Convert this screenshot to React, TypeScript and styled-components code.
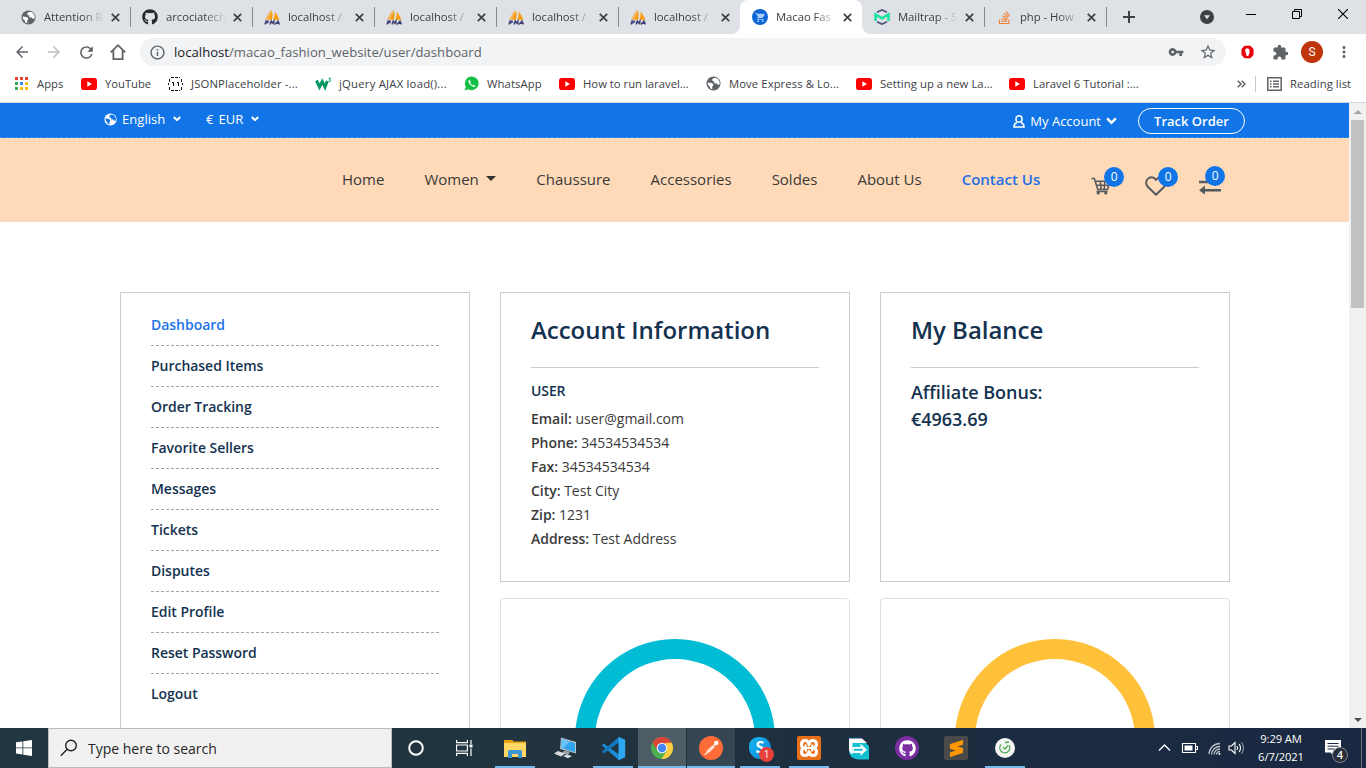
import React from 'react';
import styled, { createGlobalStyle, css } from 'styled-components';
import { FaGithub, FaStackOverflow } from 'react-icons/fa';
import {
  MdArrowBack,
  MdArrowForward,
  MdRefresh,
  MdInfoOutline,
  MdVpnKey,
  MdStarBorder,
  MdExtension,
  MdMoreVert,
  MdShoppingCart,
} from 'react-icons/md';
import { SiSublimetext } from 'react-icons/si';

const GlobalStyle = createGlobalStyle`
  * { box-sizing: border-box; }
  html, body { margin: 0; height: 768px; overflow: hidden; background: #fff; }
  body { font-family: "Open Sans", "Noto Sans", sans-serif; }
  svg { display: block; flex: none; }
`;

const Screen = styled.div`
  width: 1366px;
  height: 768px;
  display: flex;
  flex-direction: column;
  overflow: hidden;
`;

/* ---------- Browser chrome ---------- */

const TabStrip = styled.div`
  height: 34px;
  flex: none;
  display: flex;
  padding-left: 8px;
  background: #dee1e6;
`;

const TabBox = styled.div<{ $active?: boolean; $divider?: boolean }>`
  position: relative;
  width: 122px;
  height: 34px;
  flex: none;
  display: flex;
  align-items: center;
  padding-left: 12px;
  ${p => p.$active && css`
    background: #fff;
    border-radius: 8px 8px 0 0;
    &::before, &::after {
      content: '';
      position: absolute;
      bottom: 0;
      width: 8px;
      height: 8px;
    }
    &::before { left: -8px; background: radial-gradient(circle at 0 0, transparent 7.5px, #fff 8px); }
    &::after { right: -8px; background: radial-gradient(circle at 100% 0, transparent 7.5px, #fff 8px); }
  `}
  ${p => p.$divider && css`
    &::after {
      content: '';
      position: absolute;
      right: -1px;
      top: 7px;
      width: 1px;
      height: 20px;
      background: #85888d;
    }
  `}
`;

const TabTitle = styled.span`
  width: 62px;
  margin-left: 8px;
  white-space: nowrap;
  font-size: 11.3px;
  line-height: 18px;
  letter-spacing: -0.05px;
  color: #3c4043;
  mask-image: linear-gradient(90deg, #000 38px, transparent 60px);
`;

const TabClose = styled.span`
  display: flex;
  margin-left: 5px;
`;

const StripSpacer = styled.div`
  flex: 1;
`;

const WindowButtons = styled.div`
  display: flex;
  align-items: center;
  height: 28px;
  gap: 36px;
  padding-right: 18px;
`;

const NewTab = styled.div`
  display: flex;
  align-items: center;
  padding-left: 17px;
`;

const DownCircle = styled.div`
  display: flex;
  align-items: center;
  padding-right: 32px;
`;

const Toolbar = styled.div`
  height: 36px;
  flex: none;
  display: flex;
  align-items: center;
  padding-left: 13px;
  color: #5f6368;
`;

const NavButtons = styled.div`
  width: 127px;
  display: flex;
  gap: 14px;
`;

const Omnibox = styled.div`
  width: 1086px;
  height: 28px;
  display: flex;
  align-items: center;
  padding: 0 9px;
  border-radius: 14px;
  background: #f1f3f4;
`;

const Url = styled.span`
  flex: 1;
  margin-left: 8px;
  font-size: 13.1px;
  letter-spacing: 0.02px;
  color: #5f6368;
  b { font-weight: 400; color: #202124; }
`;

const OmniActions = styled.div`
  display: flex;
  align-items: center;
  gap: 15px;
`;

const ToolbarActions = styled.div`
  flex: 1;
  display: flex;
  align-items: center;
  padding-left: 15px;
`;

const Blocker = styled.span`
  margin-right: 18px;
`;

const Avatar = styled.div`
  width: 22px;
  height: 22px;
  margin: 0 12px 0 12px;
  border-radius: 50%;
  background: #bf360c;
  color: #fff;
  font: 12px/22px Roboto, sans-serif;
  text-align: center;
`;

const BookmarkBar = styled.div`
  height: 33px;
  flex: none;
  display: flex;
  align-items: center;
  padding: 0 0 5px 13px;
  border-bottom: 1px solid #d5d7da;
`;

const BookmarkItem = styled.div<{ $w?: number; $ls?: number }>`
  width: ${p => (p.$w ? `${p.$w}px` : 'auto')};
  flex: none;
  display: flex;
  align-items: center;
  gap: 8px;
  font-size: 11.3px;
  line-height: 15px;
  letter-spacing: ${p => p.$ls || 0}px;
  color: #3c4043;
  white-space: nowrap;
`;

const IconSlot = styled.span`
  width: 16px;
  height: 16px;
  flex: none;
  display: flex;
  align-items: center;
  justify-content: center;
`;

const BookmarkDivider = styled.div`
  width: 1px;
  height: 16px;
  margin: 0 11px 0 9px;
  background: #c6c8cb;
`;

const AppsGrid = styled.span`
  display: grid;
  grid-template-columns: repeat(3, 3px);
  gap: 2px;
`;

const AppDot = styled.i<{ $c: string }>`
  width: 3px;
  height: 3px;
  background: ${p => p.$c};
`;

/* ---------- Page ---------- */

const Viewport = styled.div`
  height: 625px;
  flex: none;
  display: flex;
  overflow: hidden;
`;

const Page = styled.main`
  width: 1349px;
  height: 625px;
  overflow: hidden;
  background: #fff;
`;

const TopBar = styled.div`
  height: 35px;
  display: flex;
  justify-content: space-between;
  padding: 0 104px 0 104px;
  background: #1175e7;
  border-bottom: 1px dashed #378cef;
  color: #fff;
  font-size: 13px;
  font-weight: 400;
`;

const TopLeft = styled.div`
  display: flex;
  height: 32px;
  align-items: center;
`;

const Select = styled.div<{ $w: number }>`
  width: ${p => p.$w}px;
  display: flex;
  align-items: center;
  gap: 5px;
  letter-spacing: 0.05px;
  white-space: nowrap;
`;

const SelectArrow = styled.span`
  padding: 0 0 1px 3px;
`;

const TopRight = styled.div`
  display: flex;
  height: 36px;
  align-items: center;
`;

const Account = styled.div`
  display: flex;
  align-items: center;
  gap: 5px;
  margin-right: 21px;
`;

const TrackButton = styled.div`
  width: 107px;
  height: 26px;
  border: 1px solid #fff;
  border-radius: 13px;
  font-weight: 600;
  line-height: 24px;
  text-align: center;
`;

const Header = styled.header`
  height: 84px;
  display: flex;
  align-items: center;
  padding: 0 0 2px 342px;
  background: #ffdab9;
  border-bottom: 1px solid #f3dcc8;
`;

const NavLink = styled.a<{ $active?: boolean }>`
  display: flex;
  align-items: center;
  margin-right: 40px;
  font-size: 15px;
  font-weight: ${p => (p.$active ? 600 : 400)};
  color: ${p => (p.$active ? '#1f6fe5' : '#3a3a3a')};
  white-space: nowrap;
`;

const Caret = styled.i`
  margin-left: 7.5px;
  border: 5px solid transparent;
  border-top-color: #333;
  border-bottom: 0;
`;

const HeaderIcons = styled.div`
  display: flex;
  align-items: flex-start;
  gap: 32px;
  margin: 14px 0 0 11px;
`;

const HeaderIcon = styled.div`
  position: relative;
  width: 22px;
  height: 22px;
  padding-top: 1px;
`;

const Badge = styled.span<{ $x: number; $y: number }>`
  position: absolute;
  left: ${p => p.$x}px;
  top: ${p => p.$y}px;
  width: 20px;
  height: 20px;
  border-radius: 50%;
  background: #1175e7;
  color: #fff;
  font-size: 12px;
  line-height: 20px;
  text-align: center;
`;

const Content = styled.div`
  display: grid;
  grid-template-columns: 350px 350px 350px;
  grid-template-rows: 290px 290px;
  column-gap: 30px;
  row-gap: 16px;
  padding: 70px 0 0 120px;
`;

const Sidebar = styled.nav`
  grid-row: span 2;
  padding: 12px 30px 0;
  border: 1px solid #ccc;
`;

const SideLink = styled.a<{ $active?: boolean }>`
  display: block;
  height: 41px;
  border-bottom: 1px dashed #a5a5a5;
  font-size: 14px;
  font-weight: 600;
  line-height: 40px;
  letter-spacing: -0.03px;
  color: ${p => (p.$active ? '#2374e8' : '#143250')};
  &:last-child { border-bottom: 0; }
`;

const Card = styled.section`
  padding: 19px 30px;
  border: 1px solid #ccc;
`;

const CardTitle = styled.h4`
  height: 56px;
  margin: 0 0 9px;
  border-bottom: 1px solid #ccc;
  font-size: 24px;
  font-weight: 600;
  line-height: 36px;
  letter-spacing: -0.03px;
  color: #143250;
`;

const UserName = styled.h6`
  margin: 0 0 3px;
  font-size: 14px;
  font-weight: 600;
  line-height: 27px;
  letter-spacing: -0.1px;
  color: #143250;
`;

const InfoRow = styled.p`
  margin: 0;
  font-size: 14px;
  line-height: 24px;
  color: #3a3a3a;
  b { font-weight: 600; letter-spacing: -0.03px; }
`;

const Balance = styled.div`
  padding-top: 2px;
`;

const BalanceLine = styled.p`
  margin: 0;
  font-size: 18px;
  font-weight: 600;
  line-height: 27px;
  letter-spacing: -0.03px;
  color: #143250;
`;

const ChartCard = styled.section`
  display: flex;
  justify-content: center;
  align-items: flex-start;
  padding-top: 40px;
  border: 1px solid #dfdfdf;
  border-radius: 4px;
`;

const Ring = styled.div<{ $c: string }>`
  width: 200px;
  height: 200px;
  border: 20px solid ${p => p.$c};
  border-radius: 50%;
`;

const Scrollbar = styled.div`
  width: 17px;
  height: 625px;
  display: flex;
  flex-direction: column;
  align-items: center;
  background: #f1f1f1;
`;

const ScrollArrow = styled.div`
  height: 17px;
  display: flex;
  align-items: center;
`;

const Thumb = styled.div`
  width: 13px;
  height: 188px;
  margin-bottom: auto;
  background: #c1c1c1;
`;

/* ---------- Taskbar ---------- */

const Taskbar = styled.div`
  height: 40px;
  flex: none;
  display: flex;
  background: linear-gradient(90deg, #203640 0%, #21343f 40%, #1c2d40 70%, #1a2842 100%);
`;

const StartButton = styled.div`
  width: 48px;
  display: flex;
  align-items: center;
  justify-content: center;
`;

const SearchBox = styled.div`
  width: 344px;
  height: 40px;
  display: flex;
  align-items: center;
  gap: 10px;
  padding-left: 11px;
  border: 1px solid #bdbdbd;
  background: #f1f1f1;
  color: #262626;
  font-size: 14px;
`;

const TaskItem = styled.div<{ $w: number; $bar?: number; $bg?: string }>`
  position: relative;
  width: ${p => p.$w}px;
  height: 40px;
  flex: none;
  display: flex;
  align-items: center;
  justify-content: center;
  background: ${p => p.$bg || 'transparent'};
  ${p => p.$bar && css`
    &::after {
      content: '';
      position: absolute;
      bottom: 0;
      left: calc(50% - ${p.$bar / 2}px);
      width: ${p.$bar}px;
      height: 2px;
      background: #76b9ed;
    }
  `}
`;

const TaskGap = styled.div`
  width: 1px;
`;

const SkypeBlob = styled.div`
  width: 22px;
  height: 22px;
  border-radius: 9px 11px 9px 11px;
  background: linear-gradient(135deg, #1bb4f2, #0a86d8);
  color: #fff;
  font-size: 16px;
  font-weight: 700;
  line-height: 21px;
  text-align: center;
`;

const CountBadge = styled.span`
  position: absolute;
  left: 24px;
  top: 19px;
  width: 15px;
  height: 15px;
  border-radius: 50%;
  background: #e8403a;
  color: #fff;
  font-size: 10px;
  line-height: 15px;
  text-align: center;
`;

const Tile = styled.div<{ $bg: string; $r?: string }>`
  width: 24px;
  height: 24px;
  display: flex;
  align-items: center;
  justify-content: center;
  border-radius: ${p => p.$r || '2px'};
  background: ${p => p.$bg};
`;

const Tray = styled.div`
  margin-left: auto;
  display: flex;
  align-items: center;
  color: #fff;
`;

const Clock = styled.div`
  width: 64px;
  font-size: 11.2px;
  line-height: 18px;
  letter-spacing: -0.1px;
  text-align: center;
`;

const Notifications = styled.div`
  position: relative;
  width: 16px;
  height: 16px;
  margin: 0 0 0 12px;
`;

const NoticeCount = styled.span`
  position: absolute;
  left: 7px;
  top: 7px;
  width: 16px;
  height: 16px;
  border: 1px solid #7d838c;
  border-radius: 50%;
  background: #2a2f3a;
  font-size: 11px;
  font-weight: 600;
  line-height: 14px;
  text-align: center;
`;

const ShowDesktop = styled.div`
  width: 5px;
  height: 40px;
  margin-left: 20px;
  border-left: 1px solid #64707f;
`;

/* ---------- Drawings ---------- */

const GlobeIcon = ({ size = 15, disc = '#5f6368', land = '#fff' }: { size?: number; disc?: string; land?: string }) => (
  <svg width={size} height={size} viewBox="0 0 16 16">
    <circle cx="8" cy="8" r="7.500" fill={disc} />
    <path d="M1.800 6.800 4.200 7.200l2.600.6 1.200 2L6.500 11.200l.3 3-2.200-1-.8-2.400L2 9.200zM9.600 1.800 6.600 3.200l.2 1.900 2.200 1-.4 1.500 3 .3 1.200 1.800 1.600-.6.2-2.600-2-3.500z" fill={land} />
  </svg>
);

const PmaIcon = () => (
  <svg width="17" height="16" viewBox="0 0 17 16">
    <path d="M6.500 1 1 10.500h5z" fill="#f9b35c" />
    <path d="M7 .8c2 3 2.200 7 .6 10L4 10.600C6 7.500 7 4.500 7 .8z" fill="#f89c0e" />
    <path d="M10.500 2.500c2.500 2.500 3.500 5.500 5 8.300H9c1.600-2.500 2-5.300 1.500-8.300z" fill="#f89c0e" />
    <path d="M1 15.500 2 11.800h1.500q1.500.4.4 1.700l-2 .5M6 15.500 7.200 12l1 2L10 12l-.3 3.500M11 15.500 14 12l1.500 3.500M12.200 14.300H15" fill="none" stroke="#3b3c72" strokeWidth="1.300" />
  </svg>
);

const YouTubeIcon = () => (
  <svg width="16" height="12" viewBox="0 0 16 12">
    <rect width="16" height="12" rx="2.800" fill="#f00" />
    <path d="M6.300 3.300v5.400L11 6z" fill="#fff" />
  </svg>
);

const JsonIcon = () => (
  <svg width="15" height="14" viewBox="0 0 15 14" fill="none" stroke="#111" shapeRendering="crispEdges">
    <path d="M3 .5h9M3 13.500h9" strokeDasharray="3 1" />
    <path d="M1.500 1.500v3M13.500 1.500v3M1.500 9.500v3M13.500 9.500v3M.5 6v2M14.500 6v2" strokeWidth="1" />
    <path d="M4 5.500h2M5.500 6v3M9 5.500h2M10.500 6v3" />
  </svg>
);

const W3Icon = () => (
  <svg width="17" height="14" viewBox="0 0 17 14" fill="none" stroke="#059862">
    <path d="M1.500 3.500 4.500 10l2.700-5.500L10 10l2.300-6" strokeWidth="3" />
    <path d="M13.500 1.200h2.200l-1.200 1.300q1.800.5.6 1.900l-1.700-.2" strokeWidth=".9" />
  </svg>
);

const WhatsAppIcon = () => (
  <svg width="15" height="15" viewBox="0 0 15 15">
    <path d="M7.700.5A6.800 6.800 0 1 1 4.400 13.200L.6 14.400l1.200-3.700A6.800 6.800 0 0 1 7.700.5z" fill="#12c143" />
    <path d="M5.300 3.800C3.500 5 5 7.500 6.500 9s3.700 2.800 5 1.200L9.800 8.800l-1 .8Q6.900 8.700 6.200 6.800l.8-.9z" fill="#fff" />
  </svg>
);

const MailtrapIcon = () => (
  <svg width="16" height="16" viewBox="0 0 16 16">
    <path d="M3 3.300 8 .9l5 2.400M3 12.700l5 2.400 5-2.400" fill="none" stroke="#56597a" strokeWidth="1.800" />
    <path d="M1.600 12V5.500L8 9.300l6.400-3.800V12" fill="none" stroke="#17e2a0" strokeWidth="2.600" />
  </svg>
);

const CloseX = () => (
  <svg width="9" height="9" viewBox="0 0 9 9" stroke="#3c4043" strokeWidth="1.700">
    <path d="M.8.8l7.400 7.400M8.200.8.8 8.200" />
  </svg>
);

const ChevronDown = ({ size, sw }: { size: number; sw: number }) => (
  <svg width={size} height={size * 0.7} viewBox="0 0 10 7" fill="none" stroke="#fff" strokeWidth={sw}>
    <path d="M1 1.200 5 5.200l4-4" />
  </svg>
);

const ChromeIcon = () => (
  <svg width="24" height="24" viewBox="0 0 24 24">
    <circle cx="12" cy="12" r="11" fill="#4caf50" />
    <path d="M2.500 6.500A11 11 0 0 1 21.500 6.500L12 12H7z" fill="#db4437" />
    <path d="M21.500 6.500A11 11 0 0 1 11.500 23L17 14.500 15 6.500z" fill="#ffcd40" />
    <path d="M12 6.500h9.500L19 5 12 5z" fill="#db4437" />
    <path d="M2.500 6.500 7.200 14.500 8 9z" fill="#db4437" />
    <circle cx="12" cy="12" r="5.300" fill="#f4f4f4" />
    <circle cx="12" cy="12" r="4.200" fill="#4285f4" />
  </svg>
);

const VsCodeIcon = () => (
  <svg width="25" height="25" viewBox="0 0 25 25">
    <path d="M18 24.200.8 9.300 2.800 7.500 18 18.500z" fill="#1b8ad6" />
    <path d="M18 .8.8 15.700l2 1.800L18 6.500z" fill="#1478bd" />
    <path d="M17.500.8 24.200 3.800v17.400l-6.700 3z" fill="#2fa8f2" />
  </svg>
);

const ExplorerIcon = () => (
  <svg width="22" height="19" viewBox="0 0 22 19">
    <path d="M0 1h8.500l1 1.500H22V18H0z" fill="#e9a414" />
    <path d="M0 4h22v14H0z" fill="#ffd866" />
    <path d="M4 19v-6.500Q4 11 5.500 11h11Q18 11 18 12.500V19h-4v-4H8v4z" fill="#3b97d3" />
  </svg>
);

const ComputerIcon = () => (
  <svg width="24" height="24" viewBox="0 0 24 24">
    <path d="M8 1.500 23 6v11.500L7 13z" fill="#b8c2c8" />
    <path d="M8.800 2.800 22 6.900v9.400L8.200 12z" fill="#30a2ee" />
    <path d="M9 3l8 2.600L10 12.500 8.200 12z" fill="#67c2f8" />
    <path d="M11 14.500l-2 3 6 1.500 2-3z" fill="#9ba5aa" />
    <path d="M1 17.500 5 15l7 2.500-4 3zM10 20l4-1.500 5 1.500-4 2.200z" fill="#d9dddf" />
  </svg>
);

const PostmanIcon = () => (
  <svg width="24" height="24" viewBox="0 0 24 24">
    <circle cx="12" cy="12" r="12" fill="#ff6c37" />
    <path d="M5 19.500 8.500 14l5-4.500 2 1.800-5 4.700z" fill="#fff" />
    <path d="M13.800 9.200 16 7.300l1.300 1.300-2.200 2.200z" fill="#ffe1d4" />
    <circle cx="17.300" cy="7" r="2.200" fill="#fff" />
    <path d="M7 17.200l6.500-6" stroke="#ff8f66" strokeWidth=".7" />
  </svg>
);

const XamppIcon = () => (
  <svg width="20" height="20" viewBox="0 0 20 20" fill="none" stroke="#fff" strokeWidth="3" strokeLinejoin="round">
    <path d="M10 7Q9.500 2.500 6 2.500T2.500 6.500 6 10Q2.500 10.500 2.500 14T6 17.500 10 13.500Q10.500 17.500 14 17.500t3.500-3.500T14 10q3.500-.5 3.500-3.800T14 2.500 10 7z" />
    <path d="M7 10h6M6.500 6.500l.5 7M13.500 6.500l-.5 7" strokeWidth="2" />
  </svg>
);

const ShareIcon = () => (
  <svg width="24" height="24" viewBox="0 0 24 24">
    <path d="M1 1h13l5 5-5 7z" fill="#07415c" />
    <path d="M3 3.500h13l7 6.500v13.500H12q-9-1-9-9z" fill="#12bfd2" />
    <path d="M3 2.500h13l5 4.500H6.500v11.500q-3.500-2-3.500-6z" fill="#fff" />
    <path d="M6.500 11h8V7.800l6.500 6-6.500 6V17h-8z" fill="#fff" />
    <path d="M8 12.800h8.500v2H8z" fill="#12bfd2" />
  </svg>
);

const TrackerIcon = () => (
  <svg width="20" height="20" viewBox="0 0 20 20" fill="none">
    <circle cx="10" cy="10" r="10" fill="#f4f5f4" />
    <path d="M6 6.500A5 5 0 1 0 14 7M10 4.500l4-.5" stroke="#4bab50" strokeWidth="1.300" />
    <path d="M8 9l2 2 3-3.500" stroke="#4bab50" strokeWidth="1.200" />
  </svg>
);

const CartOutline = () => (
  <svg width="20" height="20" viewBox="0 0 20 20" fill="none" stroke="#555a60" strokeWidth="1.600">
    <path d="M.5 2.500h2.800l3.500 11h9.700l2.500-8.300H4.200M5.500 9.300h12M9.300 5.200l.8 8M13.800 5.200l-.5 8M5.500 15.500h11" />
    <circle cx="7.200" cy="17" r=".8" />
    <circle cx="14.800" cy="17" r=".8" />
  </svg>
);

const HeartOutline = () => (
  <svg width="22" height="20" viewBox="0 0 22 20" fill="none" stroke="#555a60" strokeWidth="2" strokeLinejoin="round">
    <path d="M11 18.700 2.600 10.500C.2 7.800.9 3.700 3.800 2 6.500.6 9.300 1.500 11 4c1.700-2.500 4.500-3.400 7.200-2 2.900 1.700 3.600 5.800 1.200 8.500z" />
  </svg>
);

const CompareIcon = () => (
  <svg width="22" height="20" viewBox="0 0 22 20" fill="#555a60">
    <path d="M0 4.700h16V1.200l5.500 4.600-5.500 4.500V7.200H0zM22 13H6V9.500L0 14.200 6 18.500v-3h16z" />
  </svg>
);

/* ---------- Data ---------- */

const TabIcon = styled(IconSlot)`
  ${Tile} { width: 16px; height: 16px; }
`;

const pma = { icon: <PmaIcon />, title: 'localhost /' };
const tabs: { icon: React.ReactNode; title: string; active?: boolean; divider?: boolean }[] = [
  { icon: <GlobeIcon />, title: 'Attention R', divider: true },
  { icon: <FaGithub size={16} color="#24292e" />, title: 'arcociatech', divider: true },
  { ...pma, divider: true },
  { ...pma, divider: true },
  { ...pma, divider: true },
  pma,
  { icon: <Tile $bg="#1066d6" $r="50%"><MdShoppingCart size={11} color="#a9d1ff" /></Tile>, title: 'Macao Fas', active: true },
  { icon: <MailtrapIcon />, title: 'Mailtrap - S', divider: true },
  { icon: <FaStackOverflow size={15} color="#ef8236" />, title: 'php - How', divider: true },
];

const youtube = <YouTubeIcon />;
const bookmarks: { icon: React.ReactNode; label: string; w: number; ls?: number }[] = [
  { icon: youtube, label: 'YouTube', w: 86, ls: -0.05 },
  { icon: <JsonIcon />, label: 'JSONPlaceholder -...', w: 148, ls: 0.14 },
  { icon: <W3Icon />, label: 'jQuery AJAX load()...', w: 148, ls: 0.22 },
  { icon: <WhatsAppIcon />, label: 'WhatsApp', w: 96, ls: 0.1 },
  { icon: youtube, label: 'How to run laravel...', w: 146 },
  { icon: <GlobeIcon />, label: 'Move Express & Lo...', w: 151, ls: 0.08 },
  { icon: youtube, label: 'Setting up a new La...', w: 153, ls: 0.06 },
  { icon: youtube, label: 'Laravel 6 Tutorial :...', w: 228 },
];

const dots = ['#ea4335', '#ea4335', '#ea4335', '#34a853', '#4285f4', '#fbbc05', '#34a853', '#fbbc05', '#fbbc05'];

const links = [
  'Dashboard', 'Purchased Items', 'Order Tracking', 'Favorite Sellers', 'Messages',
  'Tickets', 'Disputes', 'Edit Profile', 'Reset Password', 'Logout',
];

const info: [string, string][] = [
  ['Email:', 'user@gmail.com'],
  ['Phone:', '34534534534'],
  ['Fax:', '34534534534'],
  ['City:', 'Test City'],
  ['Zip:', '1231'],
  ['Address:', 'Test Address'],
];

function BrowserChrome() {
  return (
    <>
      <TabStrip>
        {tabs.map((t, i) => (
          <TabBox key={i} $active={t.active} $divider={t.divider}>
            <TabIcon>{t.icon}</TabIcon>
            <TabTitle>{t.title}</TabTitle>
            <TabClose><CloseX /></TabClose>
          </TabBox>
        ))}
        <NewTab>
          <svg width="12" height="12" viewBox="0 0 12 12" stroke="#3c4043" strokeWidth="2"><path d="M6 0v12M0 6h12" /></svg>
        </NewTab>
        <StripSpacer />
        <DownCircle>
          <svg width="14" height="14" viewBox="0 0 14 14"><circle cx="7" cy="7" r="7" fill="#3c4043" /><path d="M4 5.300h6L7 9.300z" fill="#dee1e6" /></svg>
        </DownCircle>
        <WindowButtons>
          <svg width="10" height="10" viewBox="0 0 10 10" stroke="#000"><path d="M0 5.500h10" /></svg>
          <svg width="10" height="10" viewBox="0 0 10 10" fill="none" stroke="#000"><path d="M.5 2.500h7v7h-7zM2.500 2.500v-2h7v7h-2" /></svg>
          <svg width="10" height="10" viewBox="0 0 10 10" stroke="#000" strokeWidth="1.100"><path d="M0 0l10 10M10 0 0 10" /></svg>
        </WindowButtons>
      </TabStrip>
      <Toolbar>
        <NavButtons>
          <MdArrowBack size={18} />
          <MdArrowForward size={18} color="#bdc1c6" />
          <MdRefresh size={19} />
          <svg width="16" height="18" viewBox="0 0 16 18" fill="none" stroke="#5f6368" strokeWidth="1.800"><path d="M.8 9.300 8 2.200l7.200 7.100M3.400 7.800v8.300h9.200V7.800" /></svg>
        </NavButtons>
        <Omnibox>
          <MdInfoOutline size={17} color="#5f6368" />
          <Url><b>localhost</b>/macao_fashion_website/user/dashboard</Url>
          <OmniActions>
            <MdVpnKey size={16} />
            <MdStarBorder size={18} />
          </OmniActions>
        </Omnibox>
        <ToolbarActions>
          <Blocker>
            <svg width="13" height="14" viewBox="0 0 13 14"><path d="M3.500.8h6L12.500 4v6l-3 3.200h-6L.5 10V4z" fill="#e8000b" /><path d="M4.200 6V4.200l1-.4.8-.7.8.7 1.600.2.200 3.500-1.300 3.500H5.600z" fill="#fff" /></svg>
          </Blocker>
          <MdExtension size={17} />
          <Avatar>S</Avatar>
          <MdMoreVert size={18} />
        </ToolbarActions>
      </Toolbar>
      <BookmarkBar>
        <BookmarkItem $w={68}>
          <IconSlot><AppsGrid>{dots.map((c, i) => <AppDot key={i} $c={c} />)}</AppsGrid></IconSlot>
          Apps
        </BookmarkItem>
        {bookmarks.map((b, i) => (
          <BookmarkItem key={i} $w={b.w} $ls={b.ls}><IconSlot>{b.icon}</IconSlot>{b.label}</BookmarkItem>
        ))}
        <svg width="9" height="8" viewBox="0 0 9 8" fill="none" stroke="#5f6368" strokeWidth="1.500"><path d="M.7.700 4 4 .7 7.300M4.700.700 8 4 4.700 7.300" /></svg>
        <BookmarkDivider />
        <BookmarkItem $ls={0.06}>
          <svg width="15" height="14" viewBox="0 0 15 14" fill="none" stroke="#5f6368" strokeWidth="1.500"><path d="M.8.800h13.400v12.400H.8zM3 4.200h1.500M6 4.200h6M3 7h1.500M6 7h6M3 9.800h1.500M6 9.800h6" /></svg>
          Reading list
        </BookmarkItem>
      </BookmarkBar>
    </>
  );
}

function DashboardPage() {
  return (
    <Page>
      <TopBar>
        <TopLeft>
          <Select $w={102}>
            <GlobeIcon size={13} disc="#fff" land="#1175e7" />
            English
            <SelectArrow><ChevronDown size={8} sw={2.6} /></SelectArrow>
          </Select>
          <Select $w={60}>
            <span>€</span>EUR
            <SelectArrow><ChevronDown size={8} sw={2.6} /></SelectArrow>
          </Select>
        </TopLeft>
        <TopRight>
          <Account>
            <svg width="12" height="13" viewBox="0 0 12 13" fill="none" stroke="#fff" strokeWidth="1.500"><rect x="3" y=".8" width="6" height="6.400" rx="3" /><path d="M3.800 7.800Q1 8.500 1 12h10q0-3.500-2.800-4.200" /></svg>
            My Account
            <ChevronDown size={11} sw={2.2} />
          </Account>
          <TrackButton>Track Order</TrackButton>
        </TopRight>
      </TopBar>
      <Header>
        <NavLink>Home</NavLink>
        <NavLink>Women<Caret /></NavLink>
        <NavLink>Chaussure</NavLink>
        <NavLink>Accessories</NavLink>
        <NavLink>Soldes</NavLink>
        <NavLink>About Us</NavLink>
        <NavLink $active>Contact Us</NavLink>
        <HeaderIcons>
          <HeaderIcon><CartOutline /><Badge $x={13} $y={-8}>0</Badge></HeaderIcon>
          <HeaderIcon><HeartOutline /><Badge $x={13} $y={-8}>0</Badge></HeaderIcon>
          <HeaderIcon><CompareIcon /><Badge $x={6} $y={-9}>0</Badge></HeaderIcon>
        </HeaderIcons>
      </Header>
      <Content>
        <Sidebar>
          {links.map((l, i) => <SideLink key={l} $active={i === 0}>{l}</SideLink>)}
        </Sidebar>
        <Card>
          <CardTitle>Account Information</CardTitle>
          <UserName>USER</UserName>
          {info.map(([k, v]) => <InfoRow key={k}><b>{k}</b> {v}</InfoRow>)}
        </Card>
        <Card>
          <CardTitle>My Balance</CardTitle>
          <Balance>
            <BalanceLine>Affiliate Bonus:</BalanceLine>
            <BalanceLine>€4963.69</BalanceLine>
          </Balance>
        </Card>
        <ChartCard><Ring $c="#00bcd4" /></ChartCard>
        <ChartCard><Ring $c="#ffc139" /></ChartCard>
      </Content>
    </Page>
  );
}

function WindowsTaskbar() {
  return (
    <Taskbar>
      <StartButton>
        <svg width="16" height="16" viewBox="0 0 16 16" fill="#fff"><path d="M0 2.300 6.500 1.400v6.100H0zM7.300 1.300 16 0v7.500H7.300zM0 8.300h6.500v6.200L0 13.600zM7.300 8.300H16V16l-8.700-1.300z" /></svg>
      </StartButton>
      <SearchBox>
        <svg width="18" height="18" viewBox="0 0 18 18" fill="none" stroke="#222" strokeWidth="1.400"><circle cx="11" cy="6.500" r="5.300" /><path d="M7.200 10.300.8 16.700" /></svg>
        Type here to search
      </SearchBox>
      <TaskItem $w={48}>
        <svg width="16" height="16" viewBox="0 0 16 16" fill="none" stroke="#fff" strokeWidth="2"><circle cx="8" cy="8" r="6.800" /></svg>
      </TaskItem>
      <TaskItem $w={48}>
        <svg width="17" height="16" viewBox="0 0 17 16" fill="none" stroke="#fff" strokeWidth="1.200"><path d="M.6 0v2.600h10.800V0M.6 16v-2.600h10.800V16M.6 5h10.800v6H.6zM15 0v4M15 8.500V16" /><path d="M13.500 4.500h3v3h-3z" fill="#fff" stroke="none" /></svg>
      </TaskItem>
      <TaskItem $w={54} $bar={40}><ExplorerIcon /></TaskItem>
      <TaskItem $w={46}><ComputerIcon /></TaskItem>
      <TaskItem $w={50} $bar={40}><VsCodeIcon /></TaskItem>
      <TaskItem $w={48} $bar={48} $bg="#4d5c65"><ChromeIcon /></TaskItem>
      <TaskGap />
      <TaskItem $w={48} $bar={48} $bg="#354752"><PostmanIcon /></TaskItem>
      <TaskItem $w={50} $bar={40}><SkypeBlob>S</SkypeBlob><CountBadge>1</CountBadge></TaskItem>
      <TaskItem $w={48} $bar={40}><Tile $bg="#e8701a"><XamppIcon /></Tile></TaskItem>
      <TaskItem $w={50}><ShareIcon /></TaskItem>
      <TaskItem $w={48}><Tile $bg="#7b2fa0" $r="50%"><FaGithub size={17} color="#fff" /></Tile></TaskItem>
      <TaskItem $w={50}><Tile $bg="#4a4a4a"><SiSublimetext size={17} color="#ff9800" /></Tile></TaskItem>
      <TaskItem $w={48} $bar={40}><TrackerIcon /></TaskItem>
      <Tray>
        <svg width="97" height="20" viewBox="0 0 97 20" fill="none" stroke="#fff" strokeWidth="1.300">
          <path d="M7 12.500 12.500 7 18 12.500" />
          <path d="M30.500 5.500h13v9h-13zM44 8.500h1.500v3H44" strokeWidth="1.100" />
          <path d="M32.500 7.500h8v5h-8z" fill="#fff" stroke="none" />
          <path d="M57 16A11 11 0 0 1 68 5.500M59.500 16.500A8.500 8.500 0 0 1 68 8.500M62 16.500a6 6 0 0 1 6-5.500M64.500 16.500a3.500 3.500 0 0 1 3.500-3" stroke="#b9c0ca" />
          <circle cx="67.500" cy="16" r="1" fill="#fff" stroke="none" />
          <path d="M77 8h2.500L83 4.500v11L79.500 12H77z" strokeWidth="1.100" />
          <path d="M85 8q1.300 2 0 4M87.200 6q2.600 4 0 8" strokeWidth="1.100" />
          <path d="M89.600 4.200q3.800 5.800 0 11.600" stroke="#8b93a0" strokeWidth="1.100" />
        </svg>
        <Clock>9:29 AM<br />6/7/2021</Clock>
        <Notifications>
          <svg width="16" height="16" viewBox="0 0 16 16"><path d="M0 0h16v12.500H9V16l-3.500-3.500H0z" fill="#fff" /><path d="M2.500 3.500h11M2.500 6.200h11M2.500 9h7" stroke="#1a2842" /></svg>
          <NoticeCount>4</NoticeCount>
        </Notifications>
        <ShowDesktop />
      </Tray>
    </Taskbar>
  );
}

export default function App() {
  return (
    <Screen>
      <GlobalStyle />
      <BrowserChrome />
      <Viewport>
        <DashboardPage />
        <Scrollbar>
          <ScrollArrow><svg width="8" height="4" viewBox="0 0 8 4"><path d="M0 4h8L4 0z" fill="#a3a3a3" /></svg></ScrollArrow>
          <Thumb />
          <ScrollArrow><svg width="8" height="4" viewBox="0 0 8 4"><path d="M0 0h8L4 4z" fill="#505050" /></svg></ScrollArrow>
        </Scrollbar>
      </Viewport>
      <WindowsTaskbar />
    </Screen>
  );
}
